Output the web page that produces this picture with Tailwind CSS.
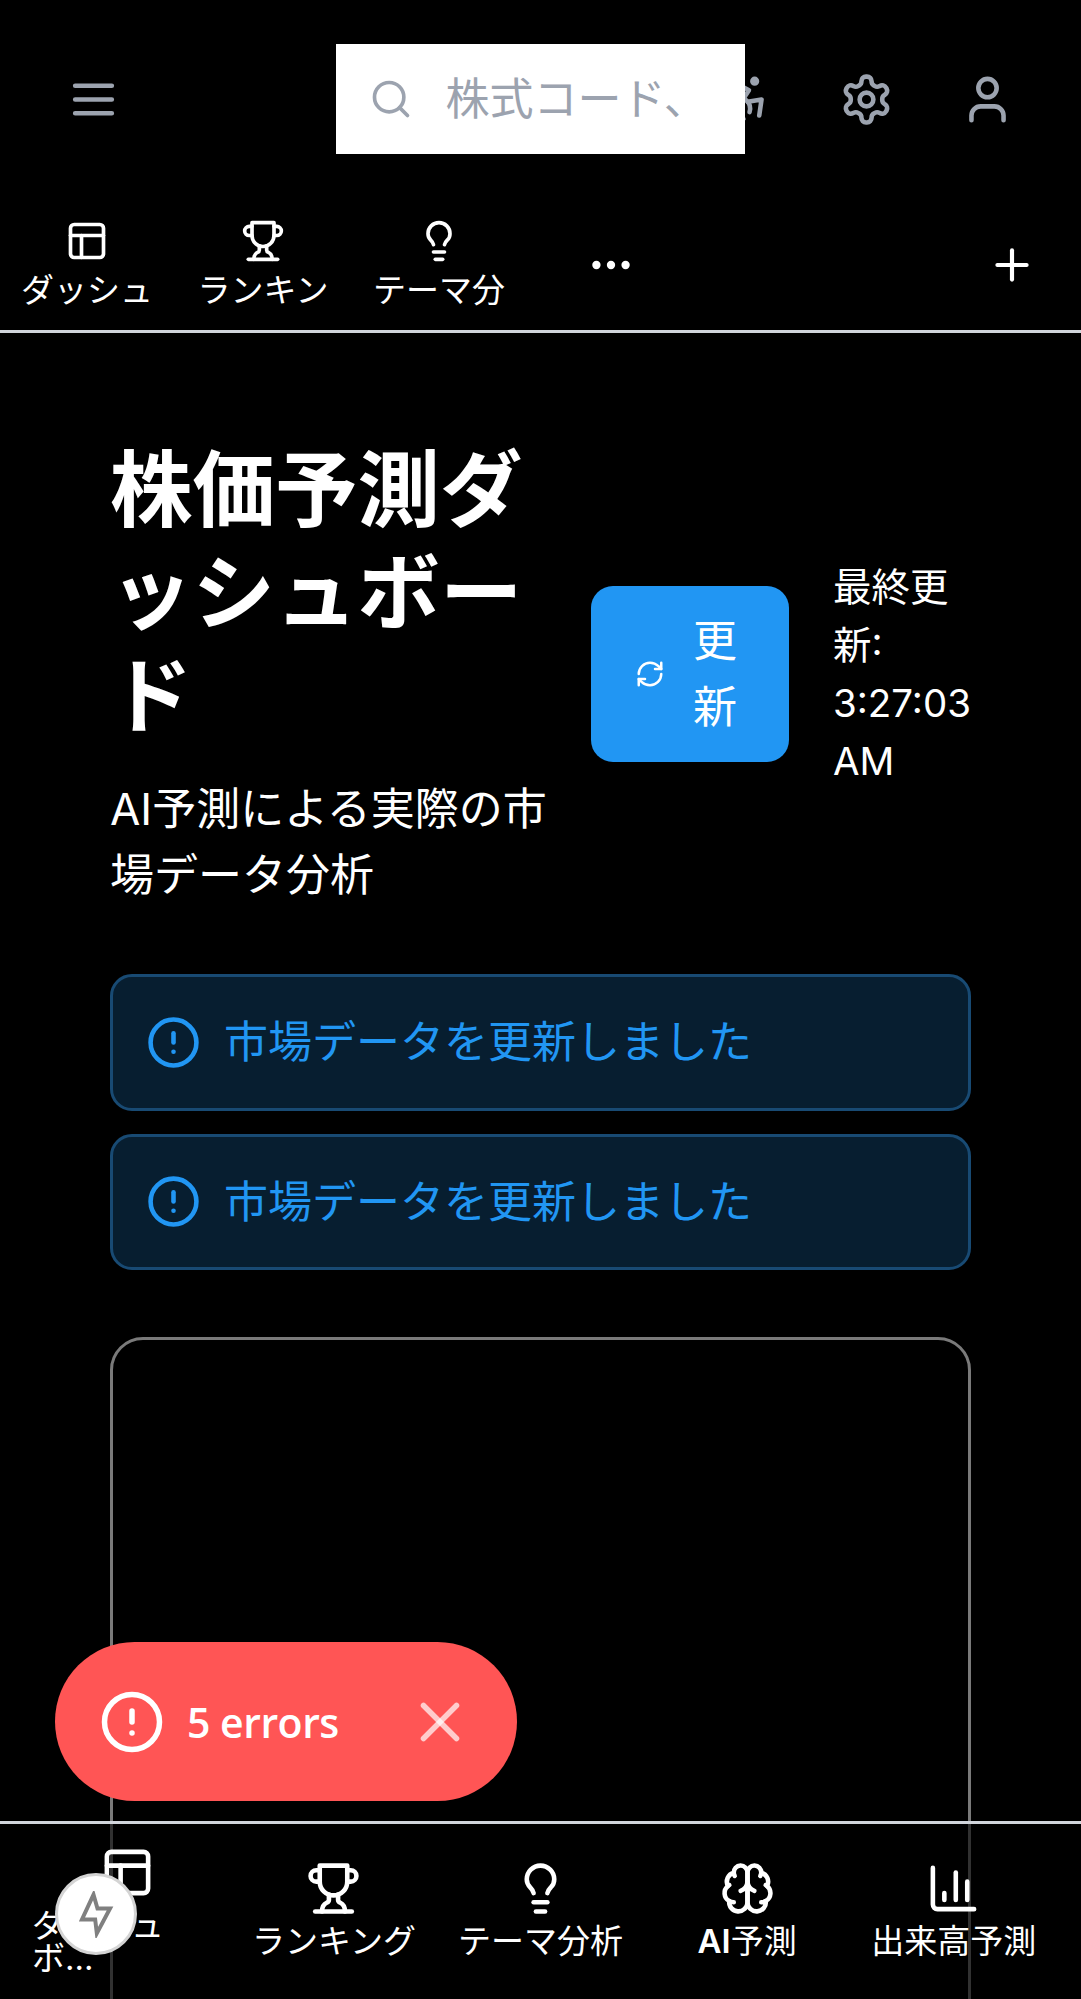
<!DOCTYPE html>
<html lang="ja">
<head>
<meta charset="utf-8">
<script src="https://cdn.jsdelivr.net/npm/@tailwindcss/browser@4"></script>
</head>
<body class="bg-black">
<div class="relative h-[1999px] w-[1081px] overflow-hidden bg-black text-white font-['Inter','Noto_Sans_CJK_JP',sans-serif]">

  <header class="flex h-[198px] items-center px-[33px]">
    <div class="flex h-[121px] w-[121px] shrink-0 items-center justify-center text-[#9ca3af]">
      <svg class="h-[55px] w-[55px]" viewBox="0 0 24 24" fill="none" stroke="currentColor" stroke-width="2" stroke-linecap="round" stroke-linejoin="round"><path d="M4 6h16M4 12h16M4 18h16"/></svg>
    </div>
    <div class="relative z-10 ml-[181.5px] -mr-[60px] flex h-[110px] w-[409.5px] shrink-0 items-center overflow-hidden bg-white pl-[33px]">
      <svg class="h-[44px] w-[44px] shrink-0 text-[#9ca3af]" viewBox="0 0 24 24" fill="none" stroke="currentColor" stroke-width="2" stroke-linecap="round" stroke-linejoin="round"><circle cx="11" cy="11" r="8"/><path d="m21 21-4.3-4.3"/></svg>
      <span class="ml-[33px] whitespace-nowrap text-[44px] leading-[66px] text-[#9ca3af]">株式コード、</span>
    </div>
    <div class="flex shrink-0 items-center text-[#9ca3af]">
      <div class="flex h-[121px] w-[121px] items-center justify-center">
        <svg class="h-[55px] w-[55px]" viewBox="0 0 24 24" fill="none" stroke="currentColor" stroke-width="2" stroke-linecap="round" stroke-linejoin="round"><circle cx="16" cy="4" r="1"/><path d="m18 19 1-7-6 1"/><path d="m5 8 3-3 5.5 3-2.36 3.5"/><path d="M4.24 14.5a5 5 0 0 0 6.88 6"/><path d="M13.76 17.5a5 5 0 0 0-6.88-6"/></svg>
      </div>
      <div class="flex h-[121px] w-[121px] items-center justify-center">
        <svg class="h-[55px] w-[55px]" viewBox="0 0 24 24" fill="none" stroke="currentColor" stroke-width="2" stroke-linecap="round" stroke-linejoin="round"><path d="M12.22 2h-.44a2 2 0 0 0-2 2v.18a2 2 0 0 1-1 1.73l-.43.25a2 2 0 0 1-2 0l-.15-.08a2 2 0 0 0-2.73.73l-.22.38a2 2 0 0 0 .73 2.73l.15.1a2 2 0 0 1 1 1.72v.51a2 2 0 0 1-1 1.74l-.15.09a2 2 0 0 0-.73 2.73l.22.38a2 2 0 0 0 2.73.73l.15-.08a2 2 0 0 1 2 0l.43.25a2 2 0 0 1 1 1.73V20a2 2 0 0 0 2 2h.44a2 2 0 0 0 2-2v-.18a2 2 0 0 1 1-1.73l.43-.25a2 2 0 0 1 2 0l.15.08a2 2 0 0 0 2.73-.73l.22-.39a2 2 0 0 0-.73-2.73l-.15-.08a2 2 0 0 1-1-1.74v-.5a2 2 0 0 1 1-1.74l.15-.09a2 2 0 0 0 .73-2.73l-.22-.38a2 2 0 0 0-2.73-.73l-.15.08a2 2 0 0 1-2 0l-.43-.25a2 2 0 0 1-1-1.73V4a2 2 0 0 0-2-2z"/><circle cx="12" cy="12" r="3"/></svg>
      </div>
      <div class="flex h-[121px] w-[121px] items-center justify-center">
        <svg class="h-[55px] w-[55px]" viewBox="0 0 24 24" fill="none" stroke="currentColor" stroke-width="2" stroke-linecap="round" stroke-linejoin="round"><path d="M19 21v-2a4 4 0 0 0-4-4H9a4 4 0 0 0-4 4v2"/><circle cx="12" cy="7" r="4"/></svg>
      </div>
    </div>
  </header>

  <nav class="flex h-[135px] items-center border-b-[3px] border-[#d1d5db] pl-[21px] pr-[44px] pt-[2px]">
    <div class="flex items-center gap-[44px]">
      <div class="flex w-[132px] flex-col items-center gap-[5px]">
        <svg class="h-[44px] w-[44px]" viewBox="0 0 24 24" fill="none" stroke="currentColor" stroke-width="2" stroke-linecap="round" stroke-linejoin="round"><rect width="18" height="18" x="3" y="3" rx="2"/><path d="M3 9h18"/><path d="M9 21V9"/></svg>
        <span class="h-[44px] w-full overflow-hidden whitespace-nowrap text-center text-[33px] leading-[44px]">ダッシュ</span>
      </div>
      <div class="flex w-[132px] flex-col items-center gap-[5px]">
        <svg class="h-[44px] w-[44px]" viewBox="0 0 24 24" fill="none" stroke="currentColor" stroke-width="2" stroke-linecap="round" stroke-linejoin="round"><path d="M6 9H4.5a2.5 2.5 0 0 1 0-5H6"/><path d="M18 9h1.5a2.5 2.5 0 0 0 0-5H18"/><path d="M4 22h16"/><path d="M10 14.66V17c0 .55-.47.98-.97 1.21C7.85 18.75 7 20.24 7 22"/><path d="M14 14.66V17c0 .55.47.98.97 1.21C16.15 18.75 17 20.24 17 22"/><path d="M18 2H6v7a6 6 0 0 0 12 0V2Z"/></svg>
        <span class="h-[44px] w-full overflow-hidden whitespace-nowrap text-center text-[33px] leading-[44px]">ランキン</span>
      </div>
      <div class="flex w-[132px] flex-col items-center gap-[5px]">
        <svg class="h-[44px] w-[44px]" viewBox="0 0 24 24" fill="none" stroke="currentColor" stroke-width="2" stroke-linecap="round" stroke-linejoin="round"><path d="M15 14c.2-1 .7-1.7 1.5-2.5 1-.9 1.5-2.2 1.5-3.5A6 6 0 0 0 6 8c0 1 .2 2.2 1.5 3.5.7.7 1.3 1.5 1.5 2.5"/><path d="M9 18h6"/><path d="M10 22h4"/></svg>
        <span class="h-[44px] w-full overflow-hidden whitespace-nowrap text-center text-[33px] leading-[44px]">テーマ分</span>
      </div>
    </div>
    <svg class="ml-[81px] h-[50px] w-[50px]" viewBox="0 0 24 24" fill="none" stroke="currentColor" stroke-width="2" stroke-linecap="round" stroke-linejoin="round"><circle cx="12" cy="12" r="1"/><circle cx="19" cy="12" r="1"/><circle cx="5" cy="12" r="1"/></svg>
    <svg class="ml-auto h-[50px] w-[50px]" viewBox="0 0 24 24" fill="none" stroke="currentColor" stroke-width="2" stroke-linecap="round" stroke-linejoin="round"><path d="M5 12h14"/><path d="M12 5v14"/></svg>
  </nav>

  <main class="px-[110px] pt-[106px]">
    <section class="flex items-center gap-[34px]">
      <div class="w-[447px] shrink-0">
        <h1 class="text-[82.5px] font-bold leading-[103px]">株価予測ダッシュボード</h1>
        <p class="mt-[28px] text-[44px] leading-[66px]">AI予測による実際の市場データ分析</p>
      </div>
      <div class="flex w-[198px] shrink-0 items-center gap-[28px] rounded-[22px] bg-[#2196f3] py-[22px] pl-[44px]">
        <svg class="h-[30px] w-[30px] shrink-0" viewBox="0 0 24 24" fill="none" stroke="currentColor" stroke-width="2" stroke-linecap="round" stroke-linejoin="round"><path d="M3 12a9 9 0 0 1 9-9 9.75 9.75 0 0 1 6.74 2.74L21 8"/><path d="M21 3v5h-5"/><path d="M21 12a9 9 0 0 1-9 9 9.75 9.75 0 0 1-6.74-2.74L3 16"/><path d="M8 16H3v5"/></svg>
        <span class="w-[44px] text-[44px] leading-[66px]">更新</span>
      </div>
      <p class="ml-[10px] w-[137px] shrink-0 text-[38.5px] leading-[58px]">最終更新: 3:27:03 AM</p>
    </section>

    <div class="mt-[66px] flex flex-col gap-[23px]">
      <div class="flex h-[136.5px] items-center gap-[23px] rounded-[22px] border-[3px] border-[#184a73] bg-[#071e30] pl-[33px] text-[#2196f3]">
        <svg class="h-[55px] w-[55px] shrink-0" viewBox="0 0 24 24" fill="none" stroke="currentColor" stroke-width="2" stroke-linecap="round" stroke-linejoin="round"><circle cx="12" cy="12" r="10"/><line x1="12" x2="12" y1="8" y2="12"/><line x1="12" x2="12.01" y1="16" y2="16"/></svg>
        <span class="text-[44px] leading-[66px]">市場データを更新しました</span>
      </div>
      <div class="flex h-[136.5px] items-center gap-[23px] rounded-[22px] border-[3px] border-[#184a73] bg-[#071e30] pl-[33px] text-[#2196f3]">
        <svg class="h-[55px] w-[55px] shrink-0" viewBox="0 0 24 24" fill="none" stroke="currentColor" stroke-width="2" stroke-linecap="round" stroke-linejoin="round"><circle cx="12" cy="12" r="10"/><line x1="12" x2="12" y1="8" y2="12"/><line x1="12" x2="12.01" y1="16" y2="16"/></svg>
        <span class="text-[44px] leading-[66px]">市場データを更新しました</span>
      </div>
    </div>

    <div class="mt-[67px] h-[900px] rounded-[33px] border-[3px] border-[#7a7a7a]"></div>
  </main>

  <footer class="absolute inset-x-0 bottom-0 z-10 h-[178px] border-t-[3px] border-[#d1d5db] bg-black/60 px-[24px] pb-[4px]">
    <div class="grid h-full grid-cols-5 items-center">
      <div class="flex flex-col items-center gap-[9px] px-[8px]">
        <svg class="h-[55px] w-[55px]" viewBox="0 0 24 24" fill="none" stroke="currentColor" stroke-width="2" stroke-linecap="round" stroke-linejoin="round"><rect width="18" height="18" x="3" y="3" rx="2"/><path d="M3 9h18"/><path d="M9 21V9"/></svg>
        <span class="w-[136px] self-start text-[33px] leading-[33px]">ダッシュボ...</span>
      </div>
      <div class="flex flex-col items-center gap-[9px]">
        <svg class="h-[55px] w-[55px]" viewBox="0 0 24 24" fill="none" stroke="currentColor" stroke-width="2" stroke-linecap="round" stroke-linejoin="round"><path d="M6 9H4.5a2.5 2.5 0 0 1 0-5H6"/><path d="M18 9h1.5a2.5 2.5 0 0 0 0-5H18"/><path d="M4 22h16"/><path d="M10 14.66V17c0 .55-.47.98-.97 1.21C7.85 18.75 7 20.24 7 22"/><path d="M14 14.66V17c0 .55.47.98.97 1.21C16.15 18.75 17 20.24 17 22"/><path d="M18 2H6v7a6 6 0 0 0 12 0V2Z"/></svg>
        <span class="whitespace-nowrap text-[33px] leading-[33px]">ランキング</span>
      </div>
      <div class="flex flex-col items-center gap-[9px]">
        <svg class="h-[55px] w-[55px]" viewBox="0 0 24 24" fill="none" stroke="currentColor" stroke-width="2" stroke-linecap="round" stroke-linejoin="round"><path d="M15 14c.2-1 .7-1.7 1.5-2.5 1-.9 1.5-2.2 1.5-3.5A6 6 0 0 0 6 8c0 1 .2 2.2 1.5 3.5.7.7 1.3 1.5 1.5 2.5"/><path d="M9 18h6"/><path d="M10 22h4"/></svg>
        <span class="whitespace-nowrap text-[33px] leading-[33px]">テーマ分析</span>
      </div>
      <div class="flex flex-col items-center gap-[9px]">
        <svg class="h-[55px] w-[55px]" viewBox="0 0 24 24" fill="none" stroke="currentColor" stroke-width="2" stroke-linecap="round" stroke-linejoin="round"><path d="M12 5a3 3 0 1 0-5.997.125 4 4 0 0 0-2.526 5.77 4 4 0 0 0 .556 6.588A4 4 0 1 0 12 18Z"/><path d="M12 5a3 3 0 1 1 5.997.125 4 4 0 0 1 2.526 5.77 4 4 0 0 1-.556 6.588A4 4 0 1 1 12 18Z"/><path d="M15 13a4.5 4.5 0 0 1-3-4 4.5 4.5 0 0 1-3 4"/><path d="M17.599 6.5a3 3 0 0 0 .399-1.375"/><path d="M6.003 5.125A3 3 0 0 0 6.401 6.5"/><path d="M3.477 10.896a4 4 0 0 1 .585-.396"/><path d="M19.938 10.5a4 4 0 0 1 .585.396"/><path d="M6 18a4 4 0 0 1-1.967-.516"/><path d="M19.967 17.484A4 4 0 0 1 18 18"/></svg>
        <span class="whitespace-nowrap text-[33px] leading-[33px]"><span class="font-semibold">AI</span>予測</span>
      </div>
      <div class="flex flex-col items-center gap-[9px]">
        <svg class="h-[55px] w-[55px]" viewBox="0 0 24 24" fill="none" stroke="currentColor" stroke-width="2" stroke-linecap="round" stroke-linejoin="round"><path d="M3 3v16a2 2 0 0 0 2 2h16"/><path d="M18 17V9"/><path d="M13 17V5"/><path d="M8 17v-3"/></svg>
        <span class="whitespace-nowrap text-[33px] leading-[33px]">出来高予測</span>
      </div>
    </div>
  </footer>

  <div class="absolute left-[55px] top-[1642px] z-20 flex h-[159px] w-[462px] items-center rounded-full bg-[#ff5555] pl-[44px]">
    <svg class="h-[66px] w-[66px] shrink-0" viewBox="0 0 24 24" fill="none" stroke="currentColor" stroke-width="2" stroke-linecap="round" stroke-linejoin="round"><circle cx="12" cy="12" r="10"/><line x1="12" x2="12" y1="8" y2="12"/><line x1="12" x2="12.01" y1="16" y2="16"/></svg>
    <span class="ml-[22px] font-['Open_Sans',sans-serif] text-[41px] font-semibold leading-[66px] tracking-[-0.5px]">5 errors</span>
    <svg class="ml-auto mr-[44px] h-[66px] w-[66px] shrink-0 text-white/70" viewBox="0 0 24 24" fill="none" stroke="currentColor" stroke-width="2" stroke-linecap="round" stroke-linejoin="round"><path d="M18 6 6 18"/><path d="m6 6 12 12"/></svg>
  </div>

  <div class="absolute left-[55px] top-[1873px] z-20 flex h-[82px] w-[82px] items-center justify-center rounded-full border-[3px] border-[#d4d4d4] bg-white">
    <svg class="h-[47px] w-[38px] text-[#808080]" viewBox="80 78 115 140" fill="none" stroke="currentColor" stroke-width="12" stroke-linejoin="miter"><path d="M130 88 95 163h40l5 42 40-75h-38z"/></svg>
  </div>
</div>
</body>
</html>
